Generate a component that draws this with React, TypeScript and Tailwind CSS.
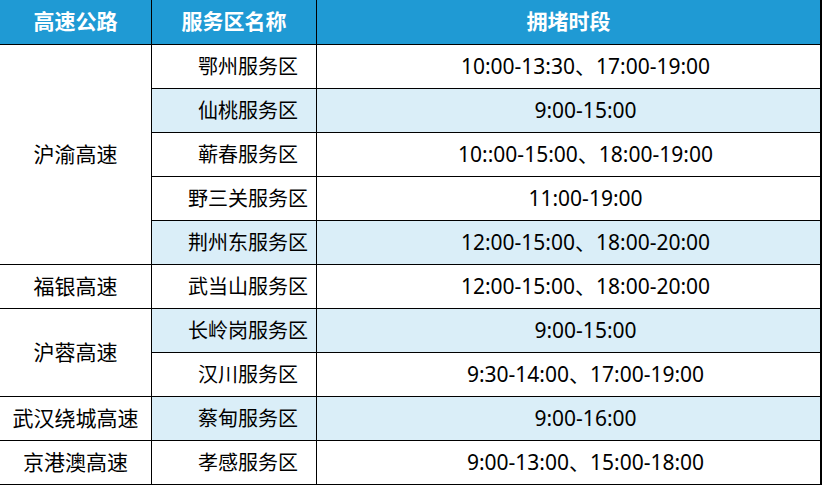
import React from "react";

const rows: { road?: string; span?: number; name: string; time: string; blue: boolean }[] = [
  { road: "沪渝高速", span: 5, name: "鄂州服务区", time: "10:00-13:30、17:00-19:00", blue: false },
  { name: "仙桃服务区", time: "9:00-15:00", blue: true },
  { name: "蕲春服务区", time: "10::00-15:00、18:00-19:00", blue: false },
  { name: "野三关服务区", time: "11:00-19:00", blue: false },
  { name: "荆州东服务区", time: "12:00-15:00、18:00-20:00", blue: true },
  { road: "福银高速", span: 1, name: "武当山服务区", time: "12:00-15:00、18:00-20:00", blue: false },
  { road: "沪蓉高速", span: 2, name: "长岭岗服务区", time: "9:00-15:00", blue: true },
  { name: "汉川服务区", time: "9:30-14:00、17:00-19:00", blue: false },
  { road: "武汉绕城高速", span: 1, name: "蔡甸服务区", time: "9:00-16:00", blue: true },
  { road: "京港澳高速", span: 1, name: "孝感服务区", time: "9:00-13:00、15:00-18:00", blue: false },
];

const spanClass: Record<number, string> = {
  1: "row-span-1",
  2: "row-span-2",
  5: "row-span-5",
};

export default function App() {
  return (
    <div
      className="w-[822px] h-[485px] bg-white"
      style={{ fontFamily: '"Noto Sans", "Noto Sans CJK SC", sans-serif' }}
    >
      <div className="grid grid-cols-[151px_164px_503px] grid-rows-[44px_repeat(10,43px)] gap-px bg-black border-r-2 border-b border-black w-[822px] text-[21px] text-black">
        <div className="bg-[#1f9ad4] text-white font-bold flex items-center justify-center">高速公路</div>
        <div className="bg-[#1f9ad4] text-white font-bold flex items-center justify-center">服务区名称</div>
        <div className="bg-[#1f9ad4] text-white font-bold flex items-center justify-center">拥堵时段</div>
        {rows.map((r, i) => (
          <React.Fragment key={i}>
            {r.road && (
              <div className={`${spanClass[r.span ?? 1]} bg-white flex items-center justify-center`}>{r.road}</div>
            )}
            <div className={`${r.blue ? "bg-[#daeef8]" : "bg-white"} flex items-center justify-center pl-[28px] text-[20px]`}>{r.name}</div>
            <div className={`${r.blue ? "bg-[#daeef8]" : "bg-white"} flex items-center justify-center pl-[34px]`}>{r.time}</div>
          </React.Fragment>
        ))}
      </div>
    </div>
  );
}
